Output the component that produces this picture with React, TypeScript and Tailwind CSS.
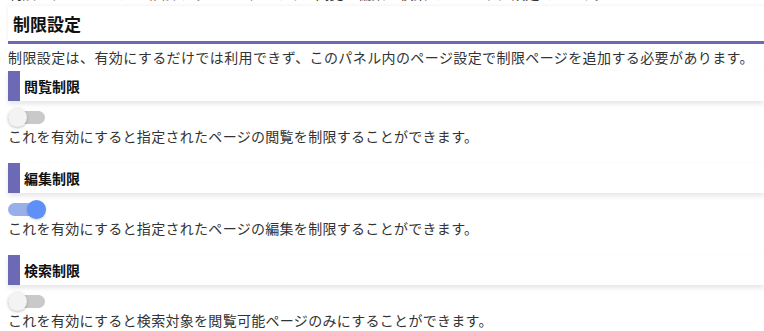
import React from "react";

const font = { fontFamily: '"Noto Sans CJK JP", "Noto Sans", sans-serif' };

function Toggle({ on }: { on: boolean }) {
  return (
    <div className="relative h-[18px] w-[38px]">
      <div
        className={
          on
            ? "absolute left-0 top-[3px] h-[13px] w-[37px] rounded-full bg-[#97b0ea]"
            : "absolute left-0 top-[3px] h-[13px] w-[37px] rounded-full bg-[#c9c9c9]"
        }
      />
      <div
        className={
          on
            ? "absolute left-[19px] top-0 h-[19px] w-[19px] rounded-full bg-[#5f8ff8] shadow-[0_1px_2px_rgba(0,0,0,0.2)]"
            : "absolute left-0 top-0 h-[19px] w-[19px] rounded-full bg-[#f3f3f3] shadow-[0_1px_3px_rgba(0,0,0,0.25)]"
        }
      />
    </div>
  );
}

function Section({ title, desc, on }: { title: string; desc: string; on: boolean }) {
  return (
    <div className="flex flex-col">
      <div className="flex h-[30px] items-center bg-white shadow-[0_3px_5px_rgba(0,0,0,0.1)]">
        <div className="h-full w-[12px] bg-[#6d6ab5]" />
        <div className="pl-[4px] text-[14px] font-bold text-[#111]">{title}</div>
      </div>
      <div className="mt-[7px]">
        <Toggle on={on} />
      </div>
      <div className="text-[14px] leading-[21px] tracking-[0.3px] text-[#333]">{desc}</div>
      <div className="h-[16px]" />
    </div>
  );
}

export default function App() {
  return (
    <div className="h-[331px] w-[764px] overflow-hidden bg-white pl-[8px]" style={font}>
      <div className="h-[4px] overflow-hidden">
        <div className="-mt-[17px] whitespace-nowrap text-[14px] leading-[21px] text-[#333]">
          制限されたページは、権限のあるユーザーのみが閲覧・編集・検索できるように設定できます。
        </div>
      </div>
      <div className="mt-[2px] flex h-[35px] items-center bg-white pl-[5px] shadow-[0_0_4px_rgba(0,0,0,0.08)]">
        <span className="text-[17px] font-bold text-[#111]">制限設定</span>
      </div>
      <div className="h-[3px] bg-[#6d6ab5]" />
      <div className="mt-[3px] whitespace-nowrap text-[14px] leading-[21px] tracking-[0.4px] text-[#333]">
        制限設定は、有効にするだけでは利用できず、このパネル内のページ設定で制限ページを追加する必要があります。
      </div>
      <div className="mt-[3px] flex flex-col">
        <Section
          title="閲覧制限"
          desc="これを有効にすると指定されたページの閲覧を制限することができます。"
          on={false}
        />
        <Section
          title="編集制限"
          desc="これを有効にすると指定されたページの編集を制限することができます。"
          on={true}
        />
        <Section
          title="検索制限"
          desc="これを有効にすると検索対象を閲覧可能ページのみにすることができます。"
          on={false}
        />
      </div>
    </div>
  );
}
